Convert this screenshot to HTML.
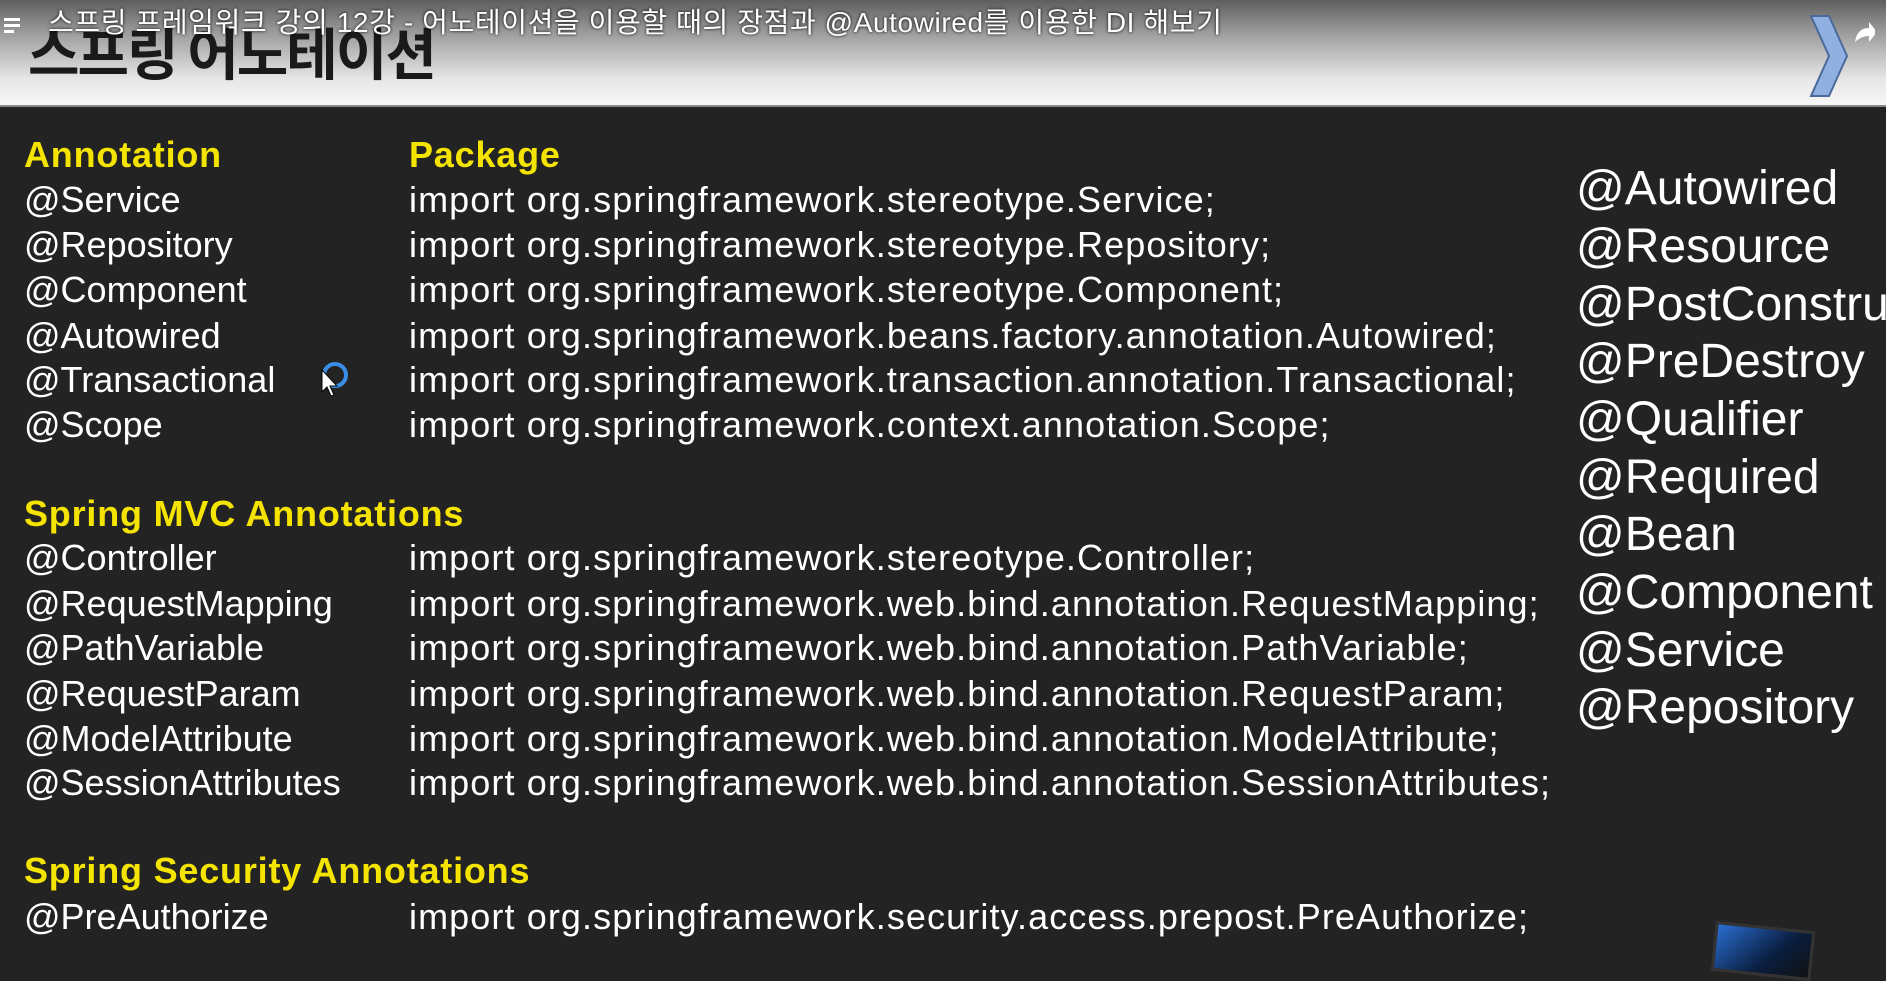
<!DOCTYPE html>
<html><head><meta charset="utf-8"><style>
*{margin:0;padding:0;box-sizing:border-box}
html,body{width:1886px;height:964px;overflow:hidden;background:#232323;font-family:"Liberation Sans","Noto Sans CJK KR",sans-serif}
#hdr{position:absolute;left:0;top:0;width:1886px;height:107px;background:linear-gradient(#5e5e5e 0%,#9a9a9a 30%,#e6e6e6 75%,#f7f7f7 100%);border-bottom:2px solid #888}
#big{position:absolute;left:28px;top:20px;font-size:56px;font-weight:bold;color:#1a1a1a;font-family:"Noto Sans CJK KR",sans-serif;letter-spacing:-2px;line-height:64px}
#yt{position:absolute;left:48px;top:7px;font-size:28px;letter-spacing:0.6px;color:#fff;font-family:"Liberation Sans","Noto Sans CJK KR",sans-serif;text-shadow:0 0 3px #000;line-height:32px}
.l{position:absolute;color:#fff;font-size:36px;line-height:40px;white-space:nowrap}
.p{letter-spacing:1.1px}
.y{color:#f5e400;font-weight:bold;letter-spacing:0.8px}
.r{position:absolute;left:1576px;color:#fff;font-size:48px;line-height:50px;white-space:nowrap}
</style></head><body>
<div id="hdr"></div>
<div id="big">스프링 어노테이션</div>
<div style="position:absolute;left:4px;top:18px;width:16px">
<div style="height:3px;background:#fff;margin-bottom:3px"></div><div style="height:3px;background:#fff;margin-bottom:3px"></div><div style="height:3px;background:#fff;width:10px"></div></div>
<div id="yt">스프링 프레임워크 강의 12강 - 어노테이션을 이용할 때의 장점과 @Autowired를 이용한 DI 해보기</div>
<svg style="position:absolute;left:1805px;top:12px" width="70" height="85" viewBox="0 0 70 85"><path d="M6 4 L24 4 L42 44 L24 84 L6 84 L24 44 Z" fill="#8fb0e0" stroke="#4a6a9a" stroke-width="2"/><path d="M50 30 q2-14 14-14 l0-6 l8 10 l-8 10 l0-6 q-8 0-14 6z" fill="#fff"/></svg>

<div class="l y" style="left:24px;top:135px">Annotation</div>
<div class="l y" style="left:409px;top:135px">Package</div>
<div class="l" style="left:24px;top:180px">@Service</div>
<div class="l p" style="left:409px;top:180px">import org.springframework.stereotype.Service;</div>
<div class="l" style="left:24px;top:225px">@Repository</div>
<div class="l p" style="left:409px;top:225px">import org.springframework.stereotype.Repository;</div>
<div class="l" style="left:24px;top:270px">@Component</div>
<div class="l p" style="left:409px;top:270px">import org.springframework.stereotype.Component;</div>
<div class="l" style="left:24px;top:316px">@Autowired</div>
<div class="l p" style="left:409px;top:316px">import org.springframework.beans.factory.annotation.Autowired;</div>
<div class="l" style="left:24px;top:360px">@Transactional</div>
<div class="l p" style="left:409px;top:360px">import org.springframework.transaction.annotation.Transactional;</div>
<div class="l" style="left:24px;top:405px">@Scope</div>
<div class="l p" style="left:409px;top:405px">import org.springframework.context.annotation.Scope;</div>

<div class="l y" style="left:24px;top:494px">Spring MVC Annotations</div>
<div class="l" style="left:24px;top:538px">@Controller</div>
<div class="l p" style="left:409px;top:538px">import org.springframework.stereotype.Controller;</div>
<div class="l" style="left:24px;top:584px">@RequestMapping</div>
<div class="l p" style="left:409px;top:584px">import org.springframework.web.bind.annotation.RequestMapping;</div>
<div class="l" style="left:24px;top:628px">@PathVariable</div>
<div class="l p" style="left:409px;top:628px">import org.springframework.web.bind.annotation.PathVariable;</div>
<div class="l" style="left:24px;top:674px">@RequestParam</div>
<div class="l p" style="left:409px;top:674px">import org.springframework.web.bind.annotation.RequestParam;</div>
<div class="l" style="left:24px;top:719px">@ModelAttribute</div>
<div class="l p" style="left:409px;top:719px">import org.springframework.web.bind.annotation.ModelAttribute;</div>
<div class="l" style="left:24px;top:763px">@SessionAttributes</div>
<div class="l p" style="left:409px;top:763px">import org.springframework.web.bind.annotation.SessionAttributes;</div>

<div class="l y" style="left:24px;top:851px">Spring Security Annotations</div>
<div class="l" style="left:24px;top:897px">@PreAuthorize</div>
<div class="l p" style="left:409px;top:897px">import org.springframework.security.access.prepost.PreAuthorize;</div>

<div class="r" style="top:164px">@Autowired</div>
<div class="r" style="top:222px">@Resource</div>
<div class="r" style="top:280px">@PostConstruct</div>
<div class="r" style="top:337px">@PreDestroy</div>
<div class="r" style="top:395px">@Qualifier</div>
<div class="r" style="top:453px">@Required</div>
<div class="r" style="top:510px">@Bean</div>
<div class="r" style="top:568px">@Component</div>
<div class="r" style="top:626px">@Service</div>
<div class="r" style="top:683px">@Repository</div>

<div style="position:absolute;left:322px;top:362px;width:26px;height:26px;border:4px solid #3a8ee8;border-radius:50%"></div>
<svg style="position:absolute;left:320px;top:368px" width="20" height="30"><path d="M2 2 L2 24 L7 19 L11 28 L14 27 L10 18 L17 18 Z" fill="#fff" stroke="#000"/></svg>
<div style="position:absolute;left:1713px;top:926px;width:100px;height:50px;background:linear-gradient(135deg,#2a6ed0,#0a1e40 60%,#111);border:3px solid #333;transform:rotate(6deg)"></div>
</body></html>
